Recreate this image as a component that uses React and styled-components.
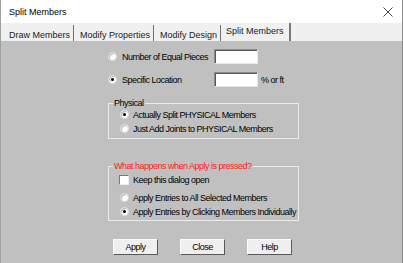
import React from "react";
import styled, { createGlobalStyle } from "styled-components";

const Global = createGlobalStyle`
  html, body { margin: 0; padding: 0; }
  body { width: 403px; height: 263px; overflow: hidden; font-family: "Liberation Sans", Arial, sans-serif; }
`;

const Win = styled.div`
  width: 403px;
  height: 263px;
  display: flex;
  flex-direction: column;
  box-sizing: border-box;
  border-right: 1px solid #8a8a8a;
  border-left: 1px solid #a0a0a0;
  background: #c0c0c0;
`;

const TitleBar = styled.div`
  flex-shrink: 0;
  height: 23px;
  background: #ffffff;
  display: flex;
  align-items: center;
  justify-content: space-between;
  padding: 0 9px 0 8px;
  font-size: 9px;
  color: #000;
`;

const TabStrip = styled.div`
  flex-shrink: 0;
  height: 18px;
  background: #f0f0f0;
  display: flex;
  align-items: flex-start;
  padding-left: 3px;
`;

const Tab = styled.div`
  font-size: 9px;
  color: #1a1a1a;
  white-space: nowrap;
  box-sizing: border-box;
  line-height: 12px;
  padding: ${p => (p.$active ? "2px 5px 0 4px" : "4px 3px 0 5px")};
  height: ${p => (p.$active ? "18px" : "16px")};
  margin-top: ${p => (p.$active ? "0" : "2px")};
  border-right: ${p => (p.$active ? "2px solid #7a7a7a" : "1px solid #707070")};
  margin-right: ${p => (p.$active ? "0" : "1px")};
`;

const Body = styled.div`
  flex: 1;
  display: flex;
  flex-direction: column;
  padding: 8px 0 0 107px;
  font-size: 9px;
  letter-spacing: -0.5px;
  color: #000;
`;

const Row = styled.div`
  display: flex;
  align-items: center;
  height: ${p => p.$h || 13}px;
  margin-top: ${p => p.$mt || 0}px;
  margin-left: ${p => p.$ml || 0}px;
`;

const RadioCircle = styled.span`
  width: 9px;
  height: 9px;
  border-radius: 50%;
  box-sizing: border-box;
  background: #ffffff;
  border: 1px solid #dcdcdc;
  box-shadow: inset 1px 1px 1px #b0b0b0;
  display: inline-flex;
  align-items: center;
  justify-content: center;
  margin-right: ${p => p.$gap || 4}px;
  flex-shrink: 0;
  &::after {
    content: "";
    width: 3px;
    height: 3px;
    border-radius: 50%;
    background: ${p => (p.$on ? "#000" : "transparent")};
  }
`;

const Check = styled.span`
  width: 10px;
  height: 10px;
  box-sizing: border-box;
  background: #fff;
  border: 1px solid #7a7a7a;
  border-right-color: #ececec;
  border-bottom-color: #ececec;
  margin-right: 4px;
  flex-shrink: 0;
`;

const Label = styled.span`
  width: ${p => (p.$w ? p.$w + "px" : "auto")};
  white-space: nowrap;
  flex-shrink: 0;
`;

const TextBox = styled.span`
  width: 44px;
  height: 15px;
  box-sizing: border-box;
  background: #fff;
  border: 1px solid #8c8c8c;
  border-right-color: #e8e8e8;
  border-bottom-color: #e8e8e8;
  box-shadow: inset 1px 1px 0 #5a5a5a;
  margin-right: 3px;
  flex-shrink: 0;
`;

const Group = styled.fieldset`
  margin: ${p => p.$mt || 0}px 0 0 0;
  width: 191px;
  box-sizing: border-box;
  border: 1px solid #ebebeb;
  padding: ${p => p.$pt || 0}px 0 ${p => p.$pb || 3}px 11px;
  min-inline-size: auto;
`;

const Legend = styled.legend`
  padding: 0 1px;
  margin-left: -7px;
  line-height: 10px;
  white-space: nowrap;
  color: ${p => p.$color || "#000"};
`;

const Buttons = styled.div`
  display: flex;
  gap: 22px;
  margin: 18px 0 0 5px;
`;

const Button = styled.div`
  width: 45px;
  height: 16px;
  box-sizing: border-box;
  background: #efefef;
  border: 1px solid #fafafa;
  border-right-color: #5a5a5a;
  border-bottom-color: #5a5a5a;
  display: flex;
  align-items: center;
  justify-content: center;
`;

export default function App() {
  return (
    <>
      <Global />
      <Win>
        <TitleBar>
          <span>Split Members</span>
          <svg width="10" height="10" viewBox="0 0 10 10">
            <path d="M0.5 0.5 L9.5 9.5 M9.5 0.5 L0.5 9.5" stroke="#444" strokeWidth="1" />
          </svg>
        </TitleBar>
        <TabStrip>
          <Tab>Draw Members</Tab>
          <Tab>Modify Properties</Tab>
          <Tab>Modify Design</Tab>
          <Tab $active>Split Members</Tab>
        </TabStrip>
        <Body>
          <Row $h={15}>
            <RadioCircle $gap={5} />
            <Label $w={92}>Number of Equal Pieces</Label>
            <TextBox />
          </Row>
          <Row $h={15} $mt={8}>
            <RadioCircle $on $gap={5} />
            <Label $w={92}>Specific Location</Label>
            <TextBox />
            <Label>% or ft</Label>
          </Row>
          <Group $mt={11}>
            <Legend>Physical</Legend>
            <Row><RadioCircle $on /><Label>Actually Split PHYSICAL Members</Label></Row>
            <Row $mt={1}><RadioCircle /><Label>Just Add Joints to PHYSICAL Members</Label></Row>
          </Group>
          <Group $mt={22} $pt={3} $pb={2}>
            <Legend $color="#ff1a1a">What happens when Apply is pressed?</Legend>
            <Row $h={12} $ml={-1}><Check /><Label>Keep this dialog open</Label></Row>
            <Row $mt={5}><RadioCircle /><Label>Apply Entries to All Selected Members</Label></Row>
            <Row $mt={1}><RadioCircle $on /><Label>Apply Entries by Clicking Members Individually</Label></Row>
          </Group>
          <Buttons>
            <Button>Apply</Button>
            <Button>Close</Button>
            <Button>Help</Button>
          </Buttons>
        </Body>
      </Win>
    </>
  );
}
